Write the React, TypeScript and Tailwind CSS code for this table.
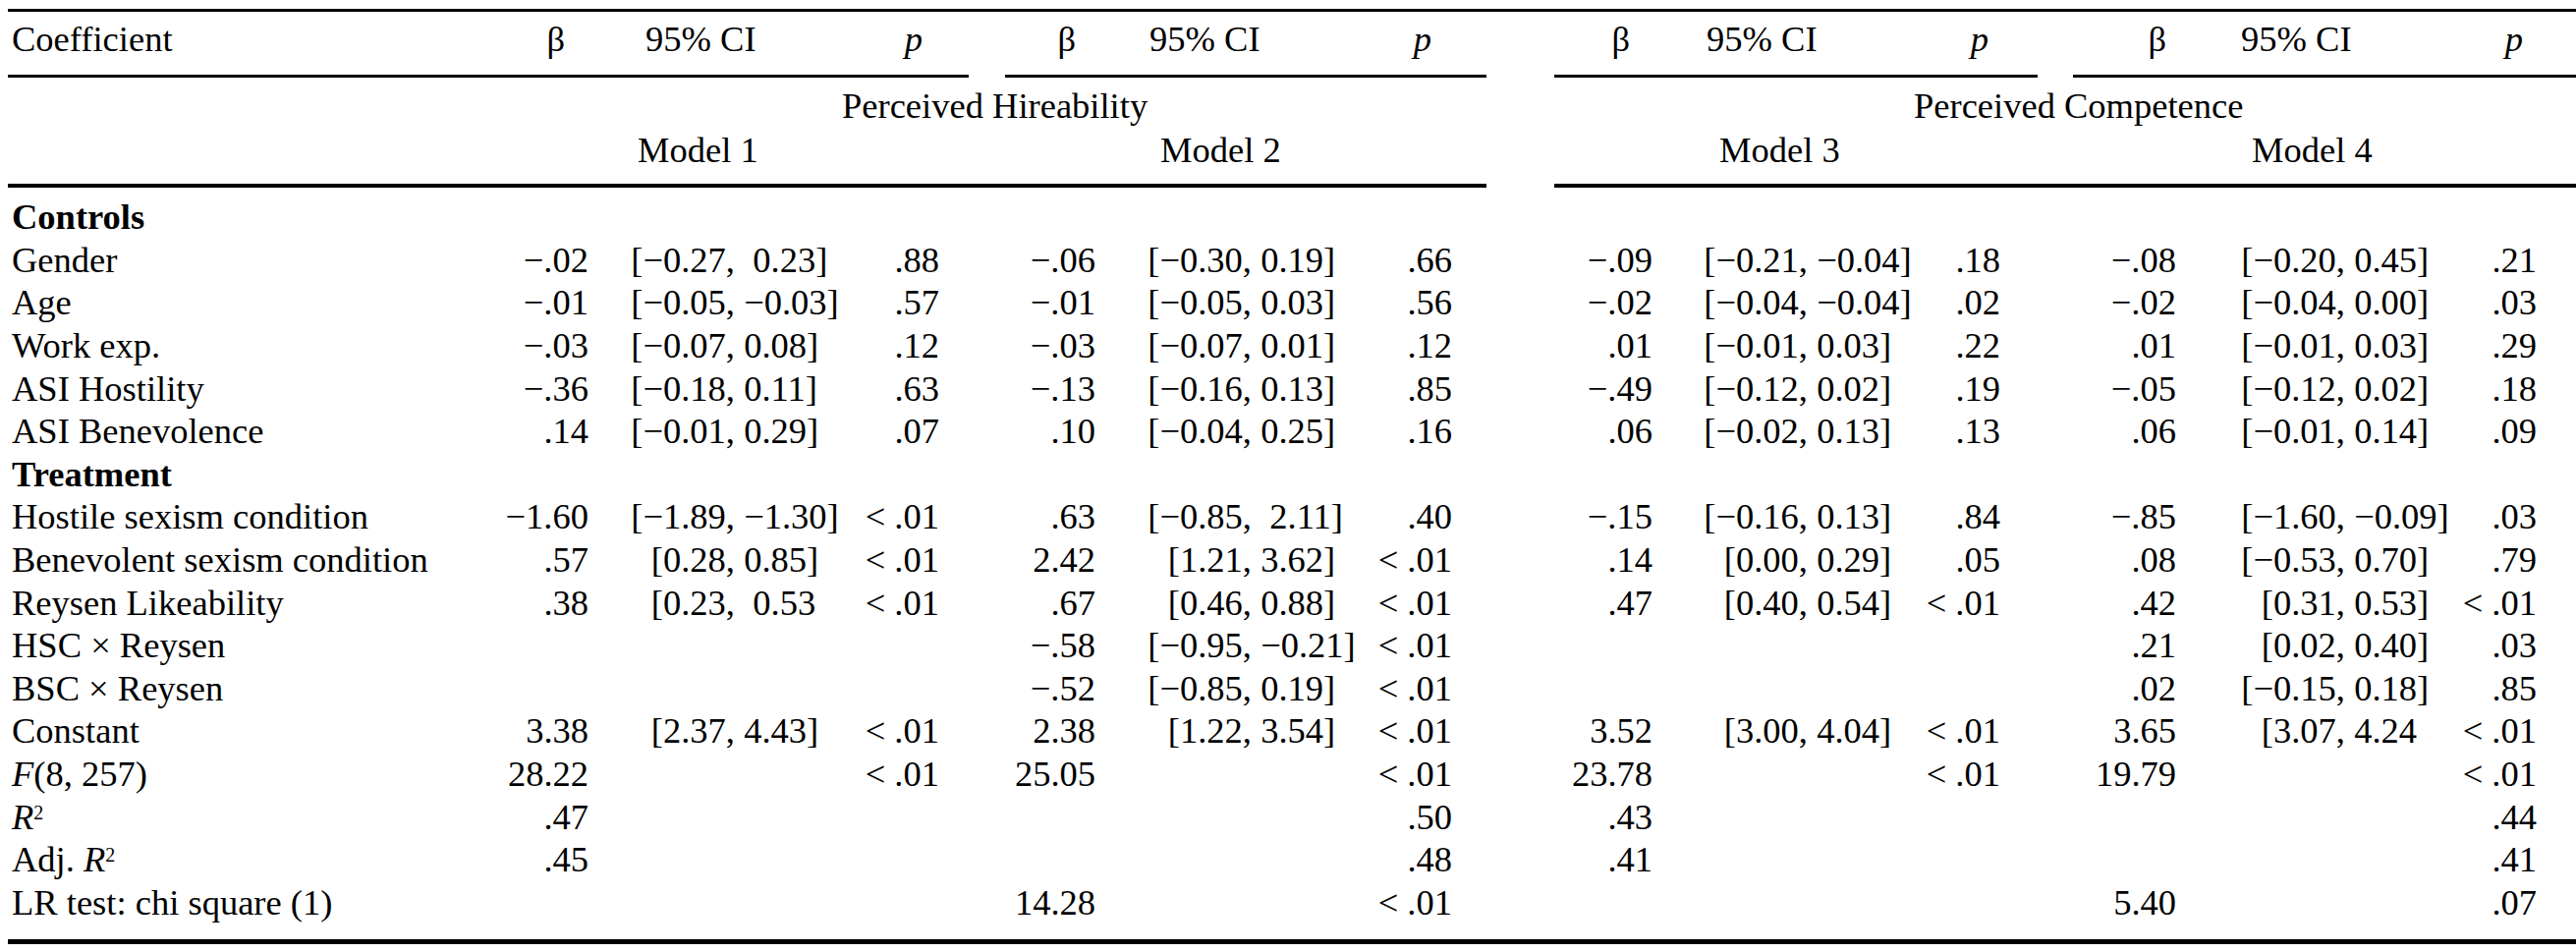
import { Fragment, type ReactNode } from "react";

type Cell = { b?: string; ci?: [string, string]; p?: string };
type Row = { label: ReactNode; bold?: boolean; m: Cell[] };

// column track widths (px) — label, then per model: β, CI left (to comma), CI right, p, pad, gap
const cols =
  "grid grid-cols-[505px_94px_149px_122px_86px_30px_37px_92px_159px_121px_83px_35px_69px_100px_158px_110px_86px_38px_36px_105px_172px_113px_82px_40px]";

const M = "\u2212";

const rows: Row[] = [
  { label: "Controls", bold: true, m: [{}, {}, {}, {}] },
  {
    label: "Gender",
    m: [
      { b: `${M}.02`, ci: [`[${M}0.27,`, "  0.23]"], p: ".88" },
      { b: `${M}.06`, ci: [`[${M}0.30,`, " 0.19]"], p: ".66" },
      { b: `${M}.09`, ci: [`[${M}0.21,`, ` ${M}0.04]`], p: ".18" },
      { b: `${M}.08`, ci: [`[${M}0.20,`, " 0.45]"], p: ".21" },
    ],
  },
  {
    label: "Age",
    m: [
      { b: `${M}.01`, ci: [`[${M}0.05,`, ` ${M}0.03]`], p: ".57" },
      { b: `${M}.01`, ci: [`[${M}0.05,`, " 0.03]"], p: ".56" },
      { b: `${M}.02`, ci: [`[${M}0.04,`, ` ${M}0.04]`], p: ".02" },
      { b: `${M}.02`, ci: [`[${M}0.04,`, " 0.00]"], p: ".03" },
    ],
  },
  {
    label: "Work exp.",
    m: [
      { b: `${M}.03`, ci: [`[${M}0.07,`, " 0.08]"], p: ".12" },
      { b: `${M}.03`, ci: [`[${M}0.07,`, " 0.01]"], p: ".12" },
      { b: ".01", ci: [`[${M}0.01,`, " 0.03]"], p: ".22" },
      { b: ".01", ci: [`[${M}0.01,`, " 0.03]"], p: ".29" },
    ],
  },
  {
    label: "ASI Hostility",
    m: [
      { b: `${M}.36`, ci: [`[${M}0.18,`, " 0.11]"], p: ".63" },
      { b: `${M}.13`, ci: [`[${M}0.16,`, " 0.13]"], p: ".85" },
      { b: `${M}.49`, ci: [`[${M}0.12,`, " 0.02]"], p: ".19" },
      { b: `${M}.05`, ci: [`[${M}0.12,`, " 0.02]"], p: ".18" },
    ],
  },
  {
    label: "ASI Benevolence",
    m: [
      { b: ".14", ci: [`[${M}0.01,`, " 0.29]"], p: ".07" },
      { b: ".10", ci: [`[${M}0.04,`, " 0.25]"], p: ".16" },
      { b: ".06", ci: [`[${M}0.02,`, " 0.13]"], p: ".13" },
      { b: ".06", ci: [`[${M}0.01,`, " 0.14]"], p: ".09" },
    ],
  },
  { label: "Treatment", bold: true, m: [{}, {}, {}, {}] },
  {
    label: "Hostile sexism condition",
    m: [
      { b: `${M}1.60`, ci: [`[${M}1.89,`, ` ${M}1.30]`], p: "< .01" },
      { b: ".63", ci: [`[${M}0.85,`, "  2.11]"], p: ".40" },
      { b: `${M}.15`, ci: [`[${M}0.16,`, " 0.13]"], p: ".84" },
      { b: `${M}.85`, ci: [`[${M}1.60,`, ` ${M}0.09]`], p: ".03" },
    ],
  },
  {
    label: "Benevolent sexism condition",
    m: [
      { b: ".57", ci: ["[0.28,", " 0.85]"], p: "< .01" },
      { b: "2.42", ci: ["[1.21,", " 3.62]"], p: "< .01" },
      { b: ".14", ci: ["[0.00,", " 0.29]"], p: ".05" },
      { b: ".08", ci: [`[${M}0.53,`, " 0.70]"], p: ".79" },
    ],
  },
  {
    label: "Reysen Likeability",
    m: [
      { b: ".38", ci: ["[0.23,", "  0.53"], p: "< .01" },
      { b: ".67", ci: ["[0.46,", " 0.88]"], p: "< .01" },
      { b: ".47", ci: ["[0.40,", " 0.54]"], p: "< .01" },
      { b: ".42", ci: ["[0.31,", " 0.53]"], p: "< .01" },
    ],
  },
  {
    label: "HSC \u00d7 Reysen",
    m: [
      {},
      { b: `${M}.58`, ci: [`[${M}0.95,`, ` ${M}0.21]`], p: "< .01" },
      {},
      { b: ".21", ci: ["[0.02,", " 0.40]"], p: ".03" },
    ],
  },
  {
    label: "BSC \u00d7 Reysen",
    m: [
      {},
      { b: `${M}.52`, ci: [`[${M}0.85,`, " 0.19]"], p: "< .01" },
      {},
      { b: ".02", ci: [`[${M}0.15,`, " 0.18]"], p: ".85" },
    ],
  },
  {
    label: "Constant",
    m: [
      { b: "3.38", ci: ["[2.37,", " 4.43]"], p: "< .01" },
      { b: "2.38", ci: ["[1.22,", " 3.54]"], p: "< .01" },
      { b: "3.52", ci: ["[3.00,", " 4.04]"], p: "< .01" },
      { b: "3.65", ci: ["[3.07,", " 4.24"], p: "< .01" },
    ],
  },
  {
    label: (
      <>
        <i>F</i>(8, 257)
      </>
    ),
    m: [
      { b: "28.22", p: "< .01" },
      { b: "25.05", p: "< .01" },
      { b: "23.78", p: "< .01" },
      { b: "19.79", p: "< .01" },
    ],
  },
  {
    label: (
      <>
        <i>R</i>
        <sup className="text-[20px]">2</sup>
      </>
    ),
    m: [{ b: ".47" }, { p: ".50" }, { b: ".43" }, { p: ".44" }],
  },
  {
    label: (
      <>
        Adj. <i>R</i>
        <sup className="text-[20px]">2</sup>
      </>
    ),
    m: [{ b: ".45" }, { p: ".48" }, { b: ".41" }, { p: ".41" }],
  },
  {
    label: "LR test: chi square (1)",
    m: [{}, { b: "14.28", p: "< .01" }, {}, { b: "5.40", p: ".07" }],
  },
];

function DataRow({ row }: { row: Row }) {
  return (
    <div className={`${cols} h-[43.6px] leading-[43.6px]`}>
      <div className={`pl-3 whitespace-nowrap ${row.bold ? "font-bold" : ""}`}>{row.label}</div>
      {row.m.map((c, i) => (
        <Fragment key={i}>
          <div className="text-right whitespace-pre">{c.b}</div>
          <div className="text-right whitespace-pre">{c.ci?.[0]}</div>
          <div className="text-left whitespace-pre">{c.ci?.[1]}</div>
          <div className="text-right whitespace-pre">{c.p}</div>
          <div />
          {i < 3 && <div />}
        </Fragment>
      ))}
    </div>
  );
}

export default function App() {
  return (
    <div className="h-[969px] w-full overflow-hidden bg-white text-black font-['Liberation_Serif',serif] text-[36.5px]">
      {/* top rule */}
      <div className="ml-2 mt-[9px] h-[3px] bg-black" />

      {/* column headings */}
      <div className={`${cols} h-[43.6px] pt-[6px] leading-[43.6px]`}>
        <div className="pl-3">Coefficient</div>
        <div className="text-right pr-[24px]">β</div>
        <div className="col-span-2 pl-[58px]">95% CI</div>
        <div className="text-right pr-[17px] italic">p</div>
        <div className="col-start-8 text-right pr-[20px]">β</div>
        <div className="col-span-2 pl-[55px]">95% CI</div>
        <div className="text-right pr-[21px] italic">p</div>
        <div className="col-start-14 text-right pr-[23px]">β</div>
        <div className="col-span-2 pl-[55px]">95% CI</div>
        <div className="text-right pr-[12px] italic">p</div>
        <div className="col-start-20 text-right pr-[10px]">β</div>
        <div className="col-span-2 pl-[66px]">95% CI</div>
        <div className="text-right pr-[14px] italic">p</div>
      </div>

      {/* rule under headings, one segment per model */}
      <div className={`${cols} mt-[20px]`}>
        <div className="col-span-6 ml-2 h-[3px] bg-black" />
        <div className="col-start-8 col-span-5 h-[3px] bg-black" />
        <div className="col-start-14 col-span-5 h-[3px] bg-black" />
        <div className="col-start-20 col-span-5 h-[3px] bg-black" />
      </div>

      {/* outcome + model labels */}
      <div className={`${cols} mt-[7px] h-[45px] leading-[43.6px]`}>
        <div className="col-start-2 col-span-11 pl-[352px] whitespace-nowrap">Perceived Hireability</div>
        <div className="col-start-14 col-span-11 pl-[366px] whitespace-nowrap">Perceived Competence</div>
      </div>
      <div className={`${cols} h-[43.6px] leading-[43.6px]`}>
        <div className="col-start-2 col-span-5 pl-[144px]">Model 1</div>
        <div className="col-start-8 col-span-5 pl-[158px]">Model 2</div>
        <div className="col-start-14 col-span-5 pl-[168px]">Model 3</div>
        <div className="col-start-20 col-span-5 pl-[182px]">Model 4</div>
      </div>

      <div className={`${cols} mt-[13px]`}>
        <div className="col-span-12 ml-2 h-[4px] bg-black" />
        <div className="col-start-14 col-span-11 h-[4px] bg-black" />
      </div>

      {/* body */}
      <div className="mt-[8px]">
        {rows.map((r, i) => (
          <DataRow key={i} row={r} />
        ))}
      </div>

      {/* bottom rule */}
      <div className="ml-2 mt-[16px] h-[5px] bg-black" />
    </div>
  );
}
